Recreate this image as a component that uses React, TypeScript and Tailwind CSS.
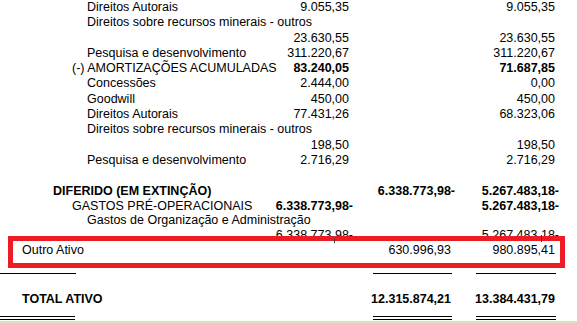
import React from "react";

type RowData = {
  h: 15 | 16 | 14;
  label?: string;
  indent?: "a" | "b" | "c" | "d";
  labelBold?: boolean;
  c1?: string;
  c2?: string;
  c3?: string;
  numBold?: boolean;
};

const heightClass: Record<number, string> = {
  14: "h-[14px]",
  15: "h-[15px]",
  16: "h-[16px]",
};

const indentClass: Record<string, string> = {
  a: "pl-[87px]",
  b: "pl-[72px]",
  c: "pl-[53px]",
  d: "pl-[22px]",
};

const rows: RowData[] = [
  { h: 15, label: "Direitos Autorais", indent: "a", c1: "9.055,35", c3: "9.055,35" },
  { h: 16, label: "Direitos sobre recursos minerais - outros", indent: "a" },
  { h: 15, c1: "23.630,55", c3: "23.630,55" },
  { h: 15, label: "Pesquisa e desenvolvimento", indent: "a", c1: "311.220,67", c3: "311.220,67" },
  { h: 15, label: "(-) AMORTIZAÇÕES ACUMULADAS", indent: "b", c1: "83.240,05", c3: "71.687,85", numBold: true },
  { h: 16, label: "Concessões", indent: "a", c1: "2.444,00", c3: "0,00" },
  { h: 15, label: "Goodwill", indent: "a", c1: "450,00", c3: "450,00" },
  { h: 15, label: "Direitos Autorais", indent: "a", c1: "77.431,26", c3: "68.323,06" },
  { h: 16, label: "Direitos sobre recursos minerais - outros", indent: "a" },
  { h: 15, c1: "198,50", c3: "198,50" },
  { h: 15, label: "Pesquisa e desenvolvimento", indent: "a", c1: "2.716,29", c3: "2.716,29" },
  { h: 16 },
  { h: 15, label: "DIFERIDO (EM EXTINÇÃO)", indent: "c", labelBold: true, c2: "6.338.773,98-", c3: "5.267.483,18-", numBold: true },
  { h: 14, label: "GASTOS PRÉ-OPERACIONAIS", indent: "b", c1: "6.338.773,98-", c3: "5.267.483,18-", numBold: true },
  { h: 15, label: "Gastos de Organização e Administração", indent: "a" },
  { h: 15, c1: "6.338.773,98-", c3: "5.267.483,18-" },
  { h: 15, label: "Outro Ativo", indent: "d", c2: "630.996,93", c3: "980.895,41" },
];

function Num({ v, bold }: { v?: string; bold?: boolean }) {
  if (!v) return null;
  const dash = v.endsWith("-");
  return (
    <span className={`whitespace-nowrap ${dash ? "" : "pr-[4px]"} ${bold ? "font-bold" : ""}`}>{v}</span>
  );
}

function Row({ r }: { r: RowData }) {
  return (
    <div className={`grid grid-cols-[353px_102px_104px] items-center ${heightClass[r.h]}`}>
      <div className="flex items-center justify-between whitespace-nowrap">
        <span className={`${r.indent ? indentClass[r.indent] : ""} ${r.labelBold ? "font-bold" : ""}`}>
          {r.label ?? ""}
        </span>
        <Num v={r.c1} bold={r.numBold} />
      </div>
      <div className="flex justify-end">
        <Num v={r.c2} bold={r.numBold} />
      </div>
      <div className="flex justify-end">
        <Num v={r.c3} bold={r.numBold} />
      </div>
    </div>
  );
}

export default function App() {
  return (
    <div
      className="relative h-[323px] w-[577px] overflow-hidden bg-white text-[12.5px] text-black"
      style={{ fontFamily: '"Liberation Sans", Arial, sans-serif' }}
    >
      <div className="-mt-[2px]">
        {rows.map((r, i) => (
          <Row key={i} r={r} />
        ))}
      </div>

      <div className="mt-[17px] flex h-px">
        <div className="w-[76px] bg-black" />
        <div className="ml-[297px] w-[79px] bg-black" />
        <div className="ml-[24px] w-[80px] bg-black" />
      </div>

      <div className="mt-[16px]">
        <Row r={{ h: 15, label: "TOTAL ATIVO", indent: "d", labelBold: true, c2: "12.315.874,21", c3: "13.384.431,79", numBold: true }} />
      </div>

      <div className="mt-[11px] flex">
        <div className="h-[4px] w-[75px] border-y border-black" />
        <div className="ml-[298px] h-[4px] w-[79px] border-y border-black" />
        <div className="ml-[24px] h-[4px] w-[80px] border-y border-black" />
      </div>

      <div className="mt-[1px] h-[2px] w-full bg-[#d8e4bc]" />

      <div className="pointer-events-none absolute left-[8px] top-[236px] h-[32px] w-[557px] border-[5px] border-[#ed1c24]" />
      <div className="absolute left-[334px] top-[238px] h-[5px] w-px bg-[#404040]" />
      <div className="absolute left-[541px] top-[235px] h-[7px] w-px bg-[#404040]" />
    </div>
  );
}
